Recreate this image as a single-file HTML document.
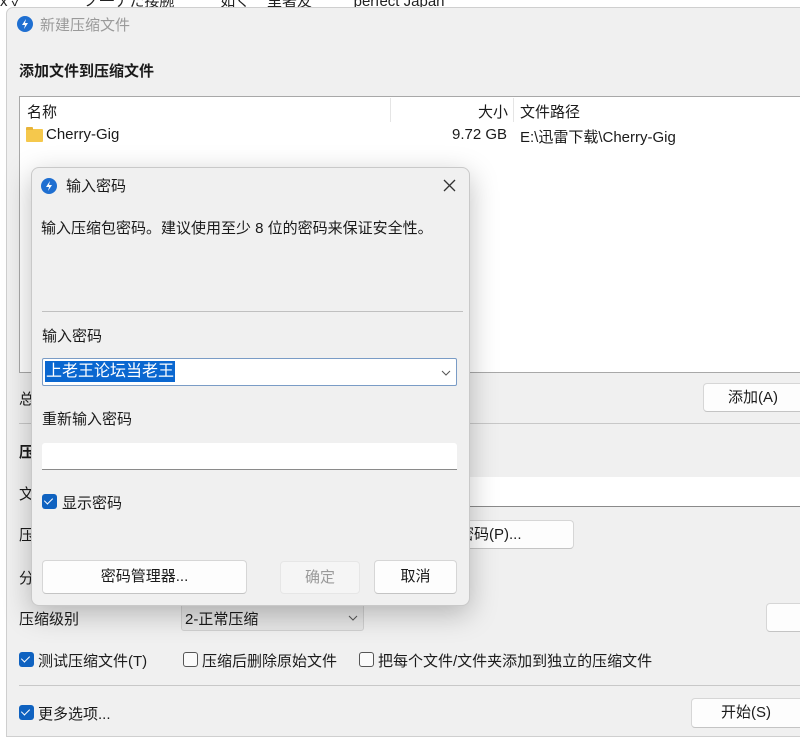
<!DOCTYPE html>
<html><head><meta charset="utf-8"><style>
*{margin:0;padding:0;box-sizing:border-box}
body{width:800px;height:732px;overflow:hidden;background:#fff;position:relative;font-family:"Liberation Sans","Noto Sans CJK SC",sans-serif;font-size:15px;color:#1a1a1a}
.a{position:absolute;white-space:nowrap}
.btn{position:absolute;background:#fdfdfd;border:1px solid #d6d6d6;border-bottom-color:#c4c4c4;border-radius:4px;text-align:center;font-size:15px}
.cb{position:absolute;width:15px;height:15px;border-radius:3px;background:#0f62c0}
.cb::after{content:"";position:absolute;left:4px;top:2px;width:4px;height:7px;border:solid #fff;border-width:0 1.5px 1.5px 0;transform:rotate(45deg)}
.cbu{position:absolute;width:15px;height:15px;border-radius:3px;border:1px solid #555;background:#fafafa}
.ic{position:absolute;width:16px;height:16px;border-radius:50%;background:#1f6fd1}
</style></head><body>
<div class="a" style="left:0;top:-10px;font-size:15px;color:#222">ẋ ✓ &nbsp;&nbsp;&nbsp;&nbsp;&nbsp;&nbsp;&nbsp;&nbsp;&nbsp;&nbsp;&nbsp;&nbsp;&nbsp; ノ一ナた接腕 &nbsp;&nbsp;&nbsp;&nbsp;&nbsp;&nbsp;&nbsp;&nbsp;&nbsp; 如く &nbsp;&nbsp; 里著友 &nbsp;&nbsp;&nbsp;&nbsp;&nbsp;&nbsp;&nbsp;&nbsp; perfect Japan</div>
<div style="position:absolute;left:6px;top:7px;width:800px;height:730px;background:#f0f0f0;border:1px solid #cfcfcf;border-radius:7px 0 0 0"></div>
<div class="ic" style="left:17px;top:16px"><svg width="16" height="16"><path d="M9 3 L5 9 H8 L7 13 L11 7 H8 Z" fill="#fff"/></svg></div>
<div class="a" style="left:40px;top:14px;color:#9a9a9a">新建压缩文件</div>
<div class="a" style="left:19px;top:60px;font-weight:bold">添加文件到压缩文件</div>
<div style="position:absolute;left:19px;top:96px;width:790px;height:277px;background:#fff;border:1px solid #a8a8a8"></div>
<div style="position:absolute;left:390px;top:98px;width:1px;height:24px;background:#e5e5e5"></div>
<div style="position:absolute;left:513px;top:98px;width:1px;height:24px;background:#e5e5e5"></div>
<div class="a" style="left:27px;top:101px">名称</div>
<div class="a" style="left:478px;top:101px">大小</div>
<div class="a" style="left:520px;top:101px">文件路径</div>
<div style="position:absolute;left:26px;top:129px;width:17px;height:13px;background:#f5c84c;border-radius:1px"></div>
<div style="position:absolute;left:26px;top:127px;width:7px;height:3px;background:#e8b43a;border-radius:1px 1px 0 0"></div>
<div class="a" style="left:46px;top:126px">Cherry-Gig</div>
<div class="a" style="left:452px;top:126px">9.72 GB</div>
<div class="a" style="left:520px;top:126px">E:\迅雷下载\Cherry-Gig</div>
<div class="a" style="left:19px;top:388px">总</div>
<div class="btn" style="left:703px;top:383px;width:110px;height:29px;line-height:27px;padding-right:10px">添加(A)</div>
<div style="position:absolute;left:19px;top:423px;width:790px;height:1px;background:#c8c8c8"></div>
<div class="a" style="left:19px;top:441px;font-weight:bold">压</div>
<div class="a" style="left:19px;top:483px">文</div>
<div style="position:absolute;left:460px;top:477px;width:350px;height:30px;background:#fff;border-bottom:1px solid #8a8a8a"></div>
<div class="a" style="left:19px;top:524px">压</div>
<div class="btn" style="left:400px;top:520px;width:174px;height:29px;line-height:27px;text-align:left;padding-left:58px">密码(P)...</div>
<div class="a" style="left:19px;top:567px">分</div>
<div class="a" style="left:19px;top:608px">压缩级别</div>
<div style="position:absolute;left:181px;top:603px;width:183px;height:28px;background:#e6e6e6;border:1px solid #d0d0d0;border-radius:3px"></div>
<div class="a" style="left:185px;top:608px">2-正常压缩</div>
<svg style="position:absolute;left:348px;top:615px" width="10" height="6"><path d="M1 1 L5 5 L9 1" stroke="#555" fill="none" stroke-width="1"/></svg>
<div class="btn" style="left:766px;top:603px;width:50px;height:29px"></div>
<div class="cb" style="left:19px;top:652px"></div>
<div class="a" style="left:38px;top:650px">测试压缩文件(T)</div>
<div class="cbu" style="left:183px;top:652px"></div>
<div class="a" style="left:202px;top:650px">压缩后删除原始文件</div>
<div class="cbu" style="left:359px;top:652px"></div>
<div class="a" style="left:378px;top:650px">把每个文件/文件夹添加到独立的压缩文件</div>
<div style="position:absolute;left:19px;top:685px;width:790px;height:1px;background:#c8c8c8"></div>
<div class="cb" style="left:19px;top:705px"></div>
<div class="a" style="left:38px;top:703px">更多选项...</div>
<div class="btn" style="left:691px;top:698px;width:120px;height:30px;line-height:28px;padding-right:10px">开始(S)</div>

<div style="position:absolute;left:31px;top:167px;width:439px;height:439px;background:#f0f0f0;border:1px solid #c9c9c9;border-radius:8px;box-shadow:0 8px 28px rgba(0,0,0,.25)"></div>
<div class="ic" style="left:41px;top:178px"><svg width="16" height="16"><path d="M9 3 L5 9 H8 L7 13 L11 7 H8 Z" fill="#fff"/></svg></div>
<div class="a" style="left:66px;top:175px">输入密码</div>
<svg style="position:absolute;left:443px;top:179px" width="13" height="13"><path d="M1 1 L12 12 M12 1 L1 12" stroke="#333" stroke-width="1.3"/></svg>
<div class="a" style="left:41px;top:217px">输入压缩包密码。建议使用至少 8 位的密码来保证安全性。</div>
<div style="position:absolute;left:42px;top:311px;width:421px;height:1px;background:#c0c0c0"></div>
<div class="a" style="left:42px;top:325px">输入密码</div>
<div style="position:absolute;left:42px;top:358px;width:415px;height:28px;background:#fff;border:1px solid #7a9cc6;border-radius:2px"></div>
<div class="a" style="left:45px;top:361px;height:21px;line-height:21px;background:#0a67d0;color:#fff;padding:0 1px;font-size:16px">上老王论坛当老王</div>
<svg style="position:absolute;left:441px;top:370px" width="10" height="6"><path d="M1 1 L5 5 L9 1" stroke="#555" fill="none" stroke-width="1"/></svg>
<div class="a" style="left:42px;top:408px">重新输入密码</div>
<div style="position:absolute;left:42px;top:443px;width:415px;height:27px;background:#fff;border-bottom:1px solid #8a8a8a;border-radius:3px 3px 0 0"></div>
<div class="cb" style="left:42px;top:494px"></div>
<div class="a" style="left:62px;top:492px">显示密码</div>
<div class="btn" style="left:42px;top:560px;width:205px;height:34px;line-height:32px">密码管理器...</div>
<div class="btn" style="left:280px;top:561px;width:80px;height:33px;line-height:31px;background:#f5f5f5;border-color:#e6e6e6;color:#9a9a9a">确定</div>
<div class="btn" style="left:374px;top:560px;width:83px;height:34px;line-height:32px">取消</div>
</body></html>
